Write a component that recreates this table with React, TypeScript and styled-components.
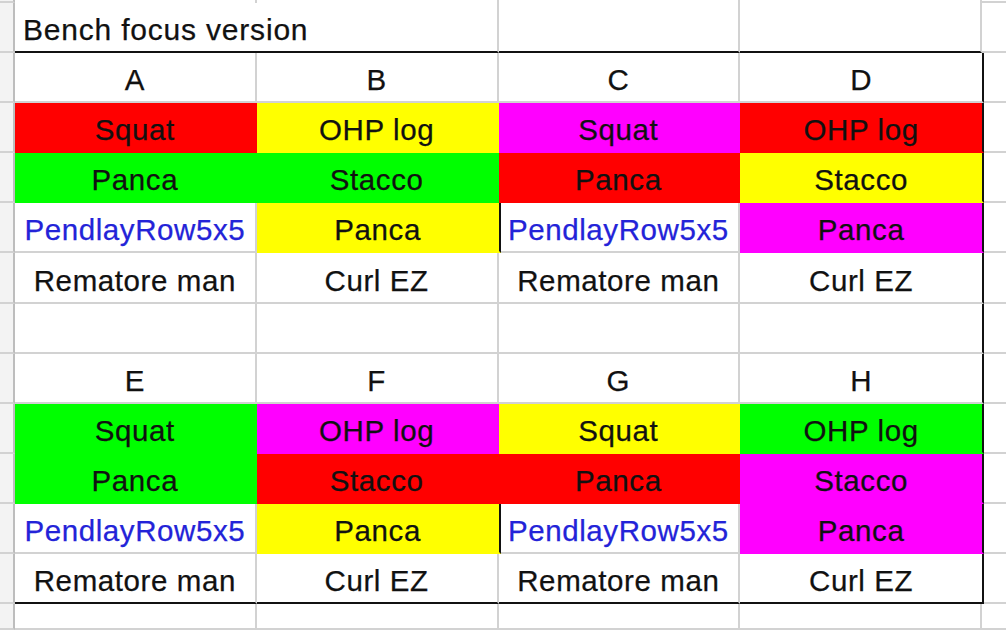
import React from "react";
import styled, { createGlobalStyle } from "styled-components";

const GlobalStyle = createGlobalStyle`
  html, body {
    margin: 0;
    padding: 0;
    background: #ffffff;
  }
  body {
    font-family: "Liberation Sans", Arial, sans-serif;
  }
`;

const GRID = "#d2d2d2";
const INK = "#111111";

type Fill = "red" | "yellow" | "magenta" | "green" | "none";

const fills: Record<Fill, string> = {
  red: "#ff0000",
  yellow: "#ffff00",
  magenta: "#ff00ff",
  green: "#00ff00",
  none: "#ffffff",
};

const Sheet = styled.div`
  width: 1006px;
  height: 630px;
  overflow: hidden;
  display: grid;
  grid-template-columns: 15px repeat(4, 241.75px) 1fr;
  grid-template-rows: 3px repeat(12, 50.1px) 1fr;
  background: #ffffff;
`;

const RowHead = styled.div`
  box-sizing: border-box;
  background: #f3f3f3;
  border-right: 2px solid #bdbdbd;
  border-bottom: 2px solid ${GRID};
`;

interface CellProps {
  $fill?: Fill;
  $right?: boolean;
  $bottom?: boolean;
  $blue?: boolean;
  $span?: number;
  $left?: boolean;
}

const Cell = styled.div<CellProps>`
  box-sizing: border-box;
  position: relative;
  z-index: ${(p) => (p.$right ? 1 : 0)};
  grid-column: span ${(p) => p.$span ?? 1};
  background: ${(p) => fills[p.$fill ?? "none"]};
  border-right: 2px solid
    ${(p) => (p.$right ? INK : p.$fill && p.$fill !== "none" ? fills[p.$fill] : GRID)};
  border-bottom: 2px solid
    ${(p) => (p.$bottom ? INK : p.$fill && p.$fill !== "none" ? fills[p.$fill] : GRID)};
  margin-right: ${(p) => (p.$right ? "-2px" : "0")};
  display: flex;
  align-items: flex-end;
  justify-content: ${(p) => (p.$left ? "flex-start" : "center")};
  padding: 0 0 4px ${(p) => (p.$left ? "8px" : "0")};
  font-size: ${(p) => (p.$left ? "30px" : "29.5px")};
  line-height: 34px;
  letter-spacing: ${(p) => (p.$left ? "0.8px" : "0.6px")};
  -webkit-text-stroke: 0.25px currentColor;
  color: ${(p) => (p.$blue ? "#2323d8" : INK)};
  white-space: nowrap;
  overflow: visible;
`;

type Entry = { text: string; fill?: Fill; blue?: boolean };

const blocks: { heads: string[]; rows: Entry[][] }[] = [
  {
    heads: ["A", "B", "C", "D"],
    rows: [
      [
        { text: "Squat", fill: "red" },
        { text: "OHP log", fill: "yellow" },
        { text: "Squat", fill: "magenta" },
        { text: "OHP log", fill: "red" },
      ],
      [
        { text: "Panca", fill: "green" },
        { text: "Stacco", fill: "green" },
        { text: "Panca", fill: "red" },
        { text: "Stacco", fill: "yellow" },
      ],
      [
        { text: "PendlayRow5x5", blue: true },
        { text: "Panca", fill: "yellow" },
        { text: "PendlayRow5x5", blue: true },
        { text: "Panca", fill: "magenta" },
      ],
      [
        { text: "Rematore man" },
        { text: "Curl EZ" },
        { text: "Rematore man" },
        { text: "Curl EZ" },
      ],
    ],
  },
  {
    heads: ["E", "F", "G", "H"],
    rows: [
      [
        { text: "Squat", fill: "green" },
        { text: "OHP log", fill: "magenta" },
        { text: "Squat", fill: "yellow" },
        { text: "OHP log", fill: "green" },
      ],
      [
        { text: "Panca", fill: "green" },
        { text: "Stacco", fill: "red" },
        { text: "Panca", fill: "red" },
        { text: "Stacco", fill: "magenta" },
      ],
      [
        { text: "PendlayRow5x5", blue: true },
        { text: "Panca", fill: "yellow" },
        { text: "PendlayRow5x5", blue: true },
        { text: "Panca", fill: "magenta" },
      ],
      [
        { text: "Rematore man" },
        { text: "Curl EZ" },
        { text: "Rematore man" },
        { text: "Curl EZ" },
      ],
    ],
  },
];

// extra column on the right edge of the view
const Tail = styled.div`
  box-sizing: border-box;
  border-bottom: 2px solid ${GRID};
`;

export default function App() {
  const lines: React.ReactNode[] = [];
  let key = 0;

  // top sliver of the previous row
  lines.push(<RowHead key={key++} />);
  for (let c = 0; c < 4; c++) lines.push(<Cell key={key++} />);
  lines.push(<Tail key={key++} />);

  // title row
  lines.push(<RowHead key={key++} />);
  lines.push(
    <Cell key={key++} $span={2} $left $bottom>
      Bench focus version
    </Cell>
  );
  lines.push(<Cell key={key++} $bottom />);
  lines.push(<Cell key={key++} $bottom />);
  lines.push(<Tail key={key++} />);

  blocks.forEach((block, bi) => {
    const last = bi === blocks.length - 1;
    lines.push(<RowHead key={key++} />);
    block.heads.forEach((h, c) =>
      lines.push(
        <Cell key={key++} $right={c === 3}>
          {h}
        </Cell>
      )
    );
    lines.push(<Tail key={key++} />);

    block.rows.forEach((row, ri) => {
      const bottom = last && ri === block.rows.length - 1;
      lines.push(<RowHead key={key++} />);
      row.forEach((e, c) =>
        lines.push(
          <Cell
            key={key++}
            $fill={e.fill}
            $blue={e.blue}
            $right={c === 3 || (c === 1 && ri === 2)}
            $bottom={bottom}
          >
            {e.text}
          </Cell>
        )
      );
      lines.push(<Tail key={key++} />);
    });

    if (!last) {
      lines.push(<RowHead key={key++} />);
      for (let c = 0; c < 4; c++) lines.push(<Cell key={key++} $right={c === 3} />);
      lines.push(<Tail key={key++} />);
    }
  });

  // row below the table
  lines.push(<RowHead key={key++} />);
  for (let c = 0; c < 4; c++) lines.push(<Cell key={key++} />);
  lines.push(<Tail key={key++} />);

  return (
    <>
      <GlobalStyle />
      <Sheet>{lines}</Sheet>
    </>
  );
}
